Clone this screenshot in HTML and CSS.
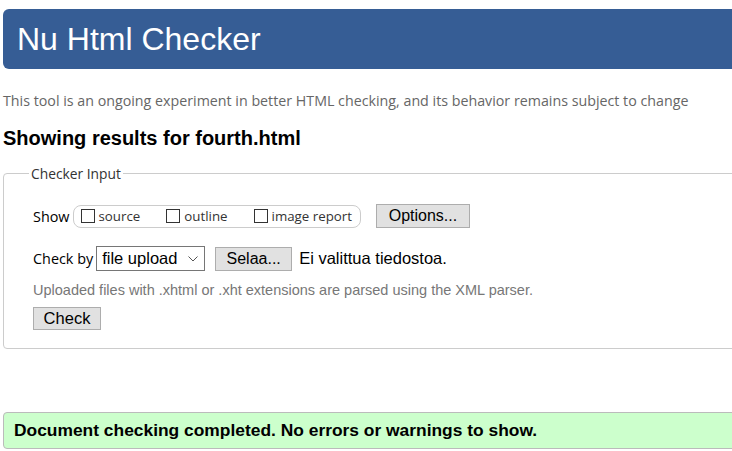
FILE: index.html
```html
<!DOCTYPE html>
<html lang="en">
<head>
<meta charset="utf-8">
<title>Nu Html Checker</title>
<link rel="stylesheet" href="styles.css">
</head>
<body>
<div class="page">
  <header class="banner"><h1 class="title">Nu Html Checker</h1></header>
  <p class="lead">This tool is an ongoing experiment in better HTML checking, and its behavior remains subject to change</p>
  <h2 class="results">Showing results for fourth.html</h2>
  <fieldset class="input">
    <legend class="legend">Checker Input</legend>
    <div class="row show-row">
      <span class="label">Show</span>
      <span class="pill">
        <label class="opt"><span class="box"></span>source</label>
        <label class="opt"><span class="box"></span>outline</label>
        <label class="opt"><span class="box"></span>image report</label>
      </span>
      <span class="btn btn-options">Options...</span>
    </div>
    <div class="row check-row">
      <span class="label">Check by</span>
      <span class="select">file upload<svg class="chev" width="10" height="6" viewBox="0 0 10 6"><path d="M0.5 0.5 L5 5 L9.5 0.5" fill="none" stroke="#555" stroke-width="1"/></svg></span>
      <span class="btn btn-browse">Selaa...</span>
      <span class="nofile">Ei valittua tiedostoa.</span>
    </div>
    <p class="hint">Uploaded files with .xhtml or .xht extensions are parsed using the XML parser.</p>
    <span class="btn btn-check">Check</span>
  </fieldset>
  <div class="success">Document checking completed. No errors or warnings to show.</div>
</div>
</body>
</html>
```
FILE: styles.css
```css
html, body {
  margin: 0;
  padding: 0;
  overflow: hidden;
  background: #fff;
}
.page {
  width: 800px;
  padding: 9px 0 0 3px;
  font-family: "Liberation Sans", Arial, sans-serif;
  color: #000;
}
.banner {
  background: #365d95;
  border-radius: 6px;
  height: 60px;
  display: flex;
  align-items: center;
  padding-left: 14px;
}
.title {
  margin: 0;
  font-family: "Liberation Sans", Arial, sans-serif;
  font-weight: normal;
  font-size: 32px;
  color: #fff;
}
.lead {
  margin: 22px 0 0 0;
  font-family: "Open Sans", sans-serif;
  font-size: 14.25px;
  color: #666;
  line-height: 20px;
}
.results {
  margin: 15px 0 0 0;
  font-size: 20px;
  font-weight: bold;
  line-height: 24px;
}
.input {
  margin: 14px 0 0 0;
  border: 1px solid #ccc;
  border-radius: 4px;
  padding: 6px 0 18px 29px;
  min-width: 0;
}
.legend {
  margin-left: -4px;
  padding: 0 2px;
  font-family: "Open Sans", sans-serif;
  font-size: 13.8px;
  color: #333;
}
.row {
  display: flex;
  align-items: center;
}
.show-row {
  margin-top: 14px;
  height: 26px;
}
.label {
  font-family: "Open Sans", sans-serif;
  font-size: 14.4px;
  color: #000;
  margin-right: 3px;
}
.pill {
  display: flex;
  align-items: center;
  border: 1px solid #ccc;
  border-radius: 8px;
  height: 21px;
  padding: 0 8px 0 7px;
  gap: 26px;
}
.opt {
  display: flex;
  align-items: center;
  font-family: "Open Sans", sans-serif;
  font-size: 13.3px;
  color: #333;
}
.box {
  width: 14px;
  height: 14px;
  border: 1px solid #333;
  margin-right: 4px;
  box-sizing: border-box;
}
.btn {
  display: inline-flex;
  align-items: center;
  justify-content: center;
  background: #e1e1e1;
  border: 1px solid #adadad;
  font-family: "Liberation Sans", Arial, sans-serif;
  font-size: 16px;
  color: #000;
  box-sizing: border-box;
}
.btn-options {
  margin-left: 15px;
  width: 94px;
  height: 24px;
}
.check-row {
  margin-top: 17px;
  height: 25px;
}
.select {
  display: inline-flex;
  align-items: center;
  justify-content: space-between;
  width: 109px;
  height: 25px;
  box-sizing: border-box;
  border: 1px solid #767676;
  padding: 0 6px 0 5px;
  font-size: 16.5px;
}
.btn-browse {
  margin-left: 10px;
  width: 77px;
  height: 24px;
}
.nofile {
  margin-left: 7px;
  font-size: 16.5px;
}
.hint {
  margin: 10px 0 0 0;
  font-size: 14.5px;
  color: #777;
  line-height: 18px;
}
.btn-check {
  margin-top: 8px;
  width: 68px;
  height: 23px;
  font-size: 16.5px;
}
.success {
  margin-top: 63px;
  background: #ccffcc;
  border: 1px solid #bbb;
  border-radius: 4px;
  height: 37px;
  box-sizing: border-box;
  display: flex;
  align-items: center;
  padding-left: 10px;
  font-size: 17.4px;
  font-weight: bold;
}
```
